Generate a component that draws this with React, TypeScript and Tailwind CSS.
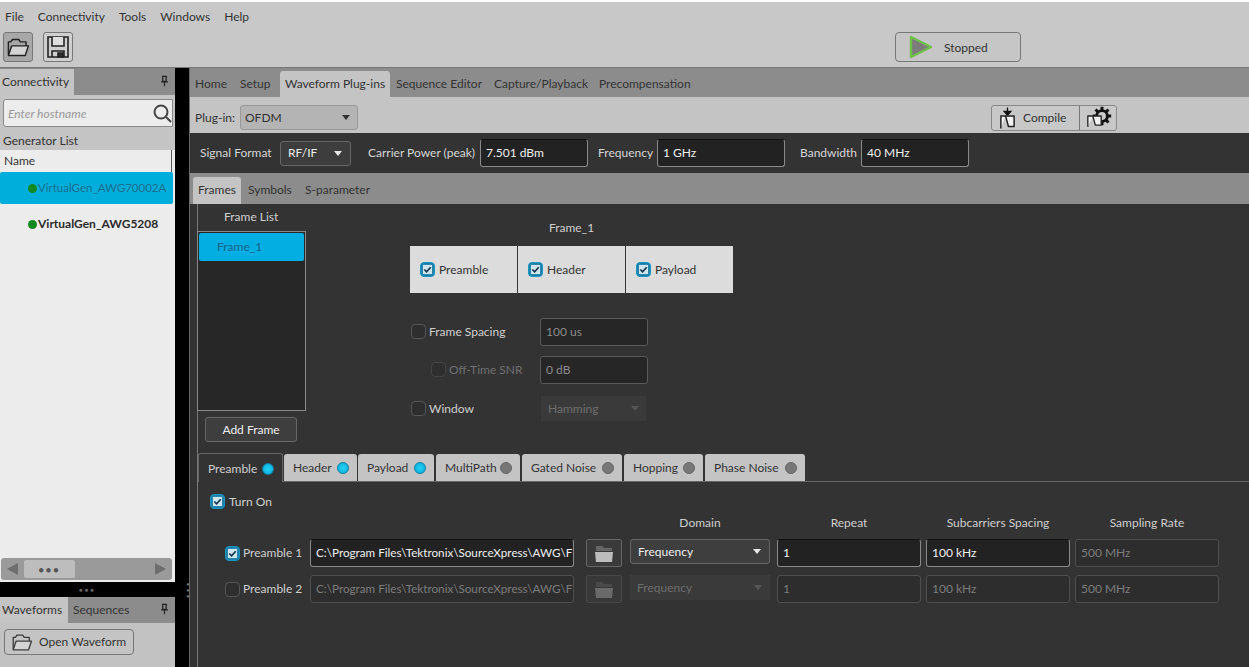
import type { ReactNode } from 'react';

const noiseTabs = [
  { name: 'Preamble', on: true, w: 'w-[85px] mr-[1px]' },
  { name: 'Header', on: true, w: 'w-[73px] mr-[1px]' },
  { name: 'Payload', on: true, w: 'w-[76px] mr-[2px]' },
  { name: 'MultiPath', on: false, w: 'w-[84px] mr-[2px]' },
  { name: 'Gated Noise', on: false, w: 'w-[100px] mr-[2px]' },
  { name: 'Hopping', on: false, w: 'w-[79px] mr-[2px]' },
  { name: 'Phase Noise', on: false, w: 'w-[100px]' },
];

function FolderIcon({ className, tone = '#3c3c3c' }: { className: string; tone?: string }) {
  return (
    <svg viewBox="0 0 30 26" className={className} fill="none" stroke={tone} strokeWidth="1.8" strokeLinejoin="round">
      <path d="M3 22V6h3l2-3h8l2 3h7v5" />
      <path d="M3 23l4-12h21l-4 12z" fill="#d4d4d4" />
    </svg>
  );
}

function SmallFolder({ dim }: { dim?: boolean }) {
  return (
    <svg viewBox="0 0 24 20" className="h-[20px] w-[24px]">
      <path d="M4 3h6l2 2h8v3H4z" fill={dim ? '#4a4a4a' : '#666'} />
      <path d="M3 9h18l-1 10H4z" fill={dim ? '#6a6a6a' : '#bdbdbd'} />
    </svg>
  );
}

function Check({ on, dim }: { on?: boolean; dim?: boolean }) {
  if (on) {
    return (
      <span className="flex h-[15px] w-[15px] shrink-0 items-center justify-center rounded-[4px] border border-[#1399c4] bg-[#1d7fa8]">
        <svg viewBox="0 0 12 12" className="h-[11px] w-[11px]" fill="#cfe6ef" stroke="#12324a" strokeWidth="1.8">
          <path d="M1 1h10v10H1z" stroke="none" />
          <path d="M2.500 6l2.500 2.500 4.500-5" fill="none" />
        </svg>
      </span>
    );
  }
  return <span className={`block h-[15px] w-[15px] shrink-0 rounded-[4px] border ${dim ? 'border-[#444]' : 'border-[#555]'} bg-[#2e2e2e]`} />;
}

function Caret({ color = '#e8e8e8' }: { color?: string }) {
  return <span className="h-0 w-0 border-x-[4px] border-t-[5px] border-x-transparent" style={{ borderTopColor: color }} />;
}

function Field({ children, w, dim, bright }: { children: ReactNode; w: string; dim?: boolean; bright?: boolean }) {
  const look = bright
    ? 'border-[#8a8a8a] border-t-[#111] bg-[#222] text-[#f0f0f0]'
    : dim
      ? 'border-[#4e4e4e] bg-[#2d2d2d] text-[#7c7c7c]'
      : 'border-[#5a5a5a] bg-[#262626] text-[#8c8c8c]';
  return (
    <div className={`flex h-[28px] items-center overflow-hidden whitespace-nowrap rounded-[3px] border px-[5px] ${w} ${look}`}>
      {children}
    </div>
  );
}

function Pin() {
  return (
    <svg viewBox="0 0 10 14" className="h-[12px] w-[9px]" fill="none" stroke="#222" strokeWidth="1.4">
      <path d="M2 1.500h6M3 1.500v6h4v-6M1 8h8M5 8v5" />
    </svg>
  );
}

function Dot({ on }: { on: boolean }) {
  return on ? (
    <span className="h-[12px] w-[12px] rounded-full border border-[#0b7fa3] bg-[radial-gradient(circle,#22d4f5,#0aa8d8)]" />
  ) : (
    <span className="h-[12px] w-[12px] rounded-full border border-[#666] bg-[#777]" />
  );
}

function Stairs({ className }: { className: string }) {
  return (
    <svg viewBox="0 0 18 16" className={className}>
      <path d="M1 15V2h6l3 11h7V2H7" fill="#f2f2f2" stroke="#222" strokeWidth="1.6" strokeLinejoin="round" />
    </svg>
  );
}

export default function App() {
  return (
    <div className="flex h-[667px] w-[1249px] flex-col overflow-hidden bg-[#c2c2c2] text-[12px] leading-none text-[#333] [font-family:'Lato',sans-serif]">
      {/* menu + toolbar */}
      <div className="h-[2px] bg-white" />
      <div className="flex h-[30px] items-center gap-[14px] bg-[#c8c8c8] pl-[5px]">
        {['File', 'Connectivity', 'Tools', 'Windows', 'Help'].map((m) => (
          <span key={m}>{m}</span>
        ))}
      </div>
      <div className="flex h-[35px] items-start gap-[10px] bg-[#c8c8c8] pl-[3px]">
        <div className="flex h-[30px] w-[30px] items-center justify-center rounded-[3px] border border-[#777] bg-[#a8a8a8]">
          <FolderIcon className="h-[21px] w-[24px]" tone="#222" />
        </div>
        <div className="flex h-[30px] w-[30px] items-center justify-center rounded-[3px] border border-[#777] bg-[#cfcfcf]">
          <svg viewBox="0 0 24 24" className="h-[24px] w-[24px]" fill="none" stroke="#222" strokeWidth="1.600">
            <path d="M2 2h20v20H2z" />
            <path d="M6 2v9h12V2" fill="#dedede" />
            <path d="M6 22v-6h12v6" />
            <path d="M12 18h5v4h-5z" fill="#333" />
          </svg>
        </div>
        <div className="ml-[812px] flex h-[30px] w-[126px] items-center rounded-[4px] border border-[#777] bg-[#c6c6c6] pl-[12px]">
          <svg viewBox="0 0 26 26" className="h-[26px] w-[26px]">
            <path d="M3 3l20 10L3 23z" fill="#7c7c7c" stroke="#6fc04a" strokeWidth="2.400" strokeLinejoin="round" />
          </svg>
          <span className="ml-[10px] pt-[1px]">Stopped</span>
        </div>
      </div>

      <div className="flex min-h-0 flex-1 border-t border-[#777]">
        {/* left dock */}
        <div className="flex w-[175px] shrink-0 flex-col">
          <div className="flex h-[27px] items-end justify-between bg-[#8c8c8c] pr-[6px]">
            <div className="flex h-[26px] w-[74px] items-center bg-[#c4c4c4] pb-[1px] pl-[2px]">Connectivity</div>
            <div className="pb-[8px]"><Pin /></div>
          </div>
          <div className="flex h-[36px] items-center bg-[#c4c4c4] pl-[3px]">
            <div className="flex h-[28px] w-[170px] items-center justify-between rounded-l-[3px] border border-[#888] bg-[#ececec] pl-[4px]">
              <span className="pt-[1px] text-[12px] italic text-[#999]">Enter hostname</span>
              <svg viewBox="0 0 20 20" className="h-[20px] w-[20px]" fill="none" stroke="#444" strokeWidth="2">
                <circle cx="9" cy="9" r="6.500" />
                <path d="M14 14l5 5" />
              </svg>
            </div>
          </div>
          <div className="flex h-[19px] items-center bg-[#c4c4c4] pl-[3px]">Generator List</div>
          <div className="flex min-h-0 flex-1 flex-col bg-[#ececec]">
            <div className="mr-[3px] flex h-[22px] items-center border-r border-[#555] pl-[4px]">Name</div>
            <div className="mr-[2px] flex h-[32px] items-center gap-[1px] rounded-[2px] bg-[#00aedb] pl-[28px] text-[#1b6f8e]">
              <span className="h-[9px] w-[9px] shrink-0 rounded-full bg-[#128a22]" />
              <span className="whitespace-nowrap text-[11.5px]">VirtualGen_AWG70002A</span>
            </div>
            <div className="flex h-[40px] items-center gap-[1px] pl-[28px] font-bold text-[#2a2a2a]">
              <span className="h-[9px] w-[9px] shrink-0 rounded-full bg-[#128a22]" />
              <span className="whitespace-nowrap">VirtualGen_AWG5208</span>
            </div>
            <div className="flex-1" />
            <div className="ml-[1px] mr-[3px] mb-[2px] flex h-[22px] items-center justify-between rounded-[3px] bg-[#9a9a9a] px-[6px]">
              <span className="h-0 w-0 border-y-[6px] border-r-[11px] border-y-transparent border-r-[#6e6e6e]" />
              <span className="ml-[6px] mr-[80px] flex h-[18px] w-[56px] items-center justify-center rounded-[2px] bg-[#bdbdbd] text-[9px] tracking-[2px] text-[#555]">●●●</span>
              <span className="h-0 w-0 border-y-[6px] border-l-[11px] border-y-transparent border-l-[#6e6e6e]" />
            </div>
          </div>
          <div className="flex h-[15px] items-center justify-center bg-black text-[6px] tracking-[2px] text-[#666]">●●●</div>
          <div className="flex h-[26px] items-end justify-between bg-[#8c8c8c] pr-[6px]">
            <div className="flex">
              <div className="flex h-[26px] w-[68px] items-center bg-[#c4c4c4] pl-[2px]">Waveforms</div>
              <div className="flex h-[26px] items-center pl-[5px]">Sequences</div>
            </div>
            <div className="pb-[8px]"><Pin /></div>
          </div>
          <div className="h-[44px] bg-[#c2c2c2] pl-[4px] pt-[6px]">
            <div className="flex h-[26px] w-[130px] items-center gap-[5px] rounded-[4px] border border-[#777] bg-[#c4c4c4] pl-[5px]">
              <FolderIcon className="h-[19px] w-[24px]" />
              <span>Open Waveform</span>
            </div>
          </div>
        </div>

        {/* splitter */}
        <div className="flex w-[14px] shrink-0 flex-col items-center justify-end bg-black pb-[68px] pl-[12px] text-[5px] leading-[6px] text-[#777]">
          <span>●</span><span>●</span><span>●</span>
        </div>

        {/* main area */}
        <div className="flex min-w-0 flex-1 flex-col border-l border-[#666] bg-[#333]">
          <div className="flex h-[29px] items-end bg-[#8c8c8c] pl-[5px]">
            <div className="flex h-[26px] w-[45px] items-center">Home</div>
            <div className="flex h-[26px] w-[40px] items-center">Setup</div>
            <div className="flex h-[26px] w-[110px] items-center justify-center rounded-t-[3px] bg-[#c4c4c4]">Waveform Plug-ins</div>
            <div className="ml-[6px] flex h-[26px] w-[98px] items-center">Sequence Editor</div>
            <div className="flex h-[26px] w-[105px] items-center">Capture/Playback</div>
            <div className="flex h-[26px] items-center">Precompensation</div>
          </div>
          <div className="flex h-[36px] items-center bg-[#c4c4c4] pl-[5px] pt-[5px]">
            <span className="w-[45px]">Plug-in:</span>
            <div className="flex h-[25px] w-[118px] items-center justify-between rounded-[3px] border border-[#999] bg-[#b4b4b4] pl-[4px] pr-[7px]">
              OFDM <Caret color="#333" />
            </div>
            <div className="ml-[633px] flex h-[26px] items-center rounded-[3px] border border-[#888] bg-[#c8c8c8]">
              <div className="flex h-full w-[88px] items-center gap-[7px] border-r border-[#777] pl-[7px]">
                <svg viewBox="0 0 18 24" className="h-[24px] w-[17px]">
                  <path d="M9 1v4M5.500 5h7L9 9z" fill="#111" stroke="#111" strokeWidth="1.400" />
                  <path d="M2 23V10h5l3 11h6V10H7" fill="#f2f2f2" stroke="#222" strokeWidth="1.600" strokeLinejoin="round" />
                </svg>
                <span className="pt-[1px]">Compile</span>
              </div>
              <div className="relative flex h-full w-[36px] items-center justify-center">
                <svg viewBox="0 0 24 24" className="h-[20px] w-[20px] -translate-y-[2px] translate-x-[4px]" fill="none" stroke="#111" strokeWidth="3.500" strokeLinejoin="round">
                  <circle cx="12" cy="12" r="6.500" />
                  <path d="M12 1v4M12 19v4M1 12h4M19 12h4M4.200 4.200l2.800 2.800M17 17l2.800 2.800M4.200 19.800L7 17M17 7l2.800-2.800" />
                </svg>
                <Stairs className="absolute bottom-[2px] left-[7px] h-[14px] w-[15px]" />
              </div>
            </div>
          </div>

          <div className="flex h-[40px] items-center bg-[#333] pl-[10px] text-[#d6d6d6]">
            <span className="w-[80px]">Signal Format</span>
            <div className="flex h-[25px] w-[71px] items-center justify-between rounded-[3px] border border-[#666] bg-[#3d3d3d] pl-[7px] pr-[8px] text-[#eee]">
              RF/IF <Caret />
            </div>
            <span className="ml-[17px] w-[112px]">Carrier Power (peak)</span>
            <Field w="w-[108px]" bright>7.501 dBm</Field>
            <span className="ml-[10px] w-[59px]">Frequency</span>
            <Field w="w-[128px]" bright>1 GHz</Field>
            <span className="ml-[15px] w-[61px]">Bandwidth</span>
            <Field w="w-[108px]" bright>40 MHz</Field>
          </div>

          <div className="flex h-[31px] items-end bg-[#8c8c8c] pl-[3px]">
            <div className="flex h-[27px] w-[48px] items-center justify-center rounded-t-[3px] bg-[#c4c4c4] pb-[1px]">Frames</div>
            <span className="ml-[7px] flex h-[27px] w-[57px] items-center pb-[1px]">Symbols</span>
            <span className="flex h-[27px] items-center pb-[1px]">S-parameter</span>
          </div>

          {/* frames panel */}
          <div className="ml-[7px] flex min-h-0 flex-1 flex-col border-l border-[#777] text-[#cfcfcf]">
            <div className="flex h-[250px]">
              <div className="-ml-[1px] w-[109px] shrink-0 pt-[6px]">
                <div className="pl-[27px] leading-[13px]">Frame List</div>
                <div className="mt-[8px] h-[180px] border border-[#8a8a8a] bg-[#272727] p-[1px]">
                  <div className="flex h-[28px] items-center rounded-[2px] bg-[#03aee2] pl-[18px] text-[#17658a]">Frame_1</div>
                </div>
                <div className="ml-[8px] mt-[6px] flex h-[25px] w-[92px] items-center justify-center rounded-[3px] border border-[#666] bg-[#3e3e3e] pt-[1px] text-[#eee]">
                  Add Frame
                </div>
              </div>
              <div className="ml-[104px] pt-[17px]">
                <div className="w-[323px] text-center leading-[13px]">Frame_1</div>
                <div className="mt-[12px] flex h-[47px] w-[323px] gap-[1px] text-[#333]">
                  {['Preamble', 'Header', 'Payload'].map((p) => (
                    <div key={p} className="flex flex-1 items-center gap-[4px] bg-[#dcdcdc] pl-[10px]">
                      <Check on />
                      <span>{p}</span>
                    </div>
                  ))}
                </div>
                <div className="mt-[25px] flex h-[27px] items-center pl-[1px]">
                  <Check />
                  <span className="ml-[3px] w-[111px]">Frame Spacing</span>
                  <Field w="w-[108px]">100 us</Field>
                </div>
                <div className="mt-[11px] flex h-[27px] items-center pl-[21px] text-[#707070]">
                  <Check dim />
                  <span className="ml-[3px] w-[91px]">Off-Time SNR</span>
                  <Field w="w-[108px]">0 dB</Field>
                </div>
                <div className="mt-[12px] flex h-[27px] items-center pl-[1px]">
                  <Check />
                  <span className="ml-[3px] w-[112px]">Window</span>
                  <div className="flex h-[25px] w-[105px] items-center justify-between bg-[#3a3a3a] px-[7px] text-[#6e6e6e]">
                    Hamming <Caret color="#555" />
                  </div>
                </div>
              </div>
            </div>

            <div className="flex h-[28px] items-end border-b border-[#666]">
              {noiseTabs.map((t, i) => (
                <div
                  key={t.name}
                  className={`flex items-center justify-between rounded-t-[3px] pl-[9px] pr-[8px] pt-[1px] ${t.w} ${i === 0 ? 'relative top-[1px] h-[29px] border border-b-0 border-[#666] bg-[#333] text-[#cfcfcf]' : 'h-[27px] bg-[#c4c4c4] text-[#333]'}`}
                >
                  <span>{t.name}</span>
                  <Dot on={t.on} />
                </div>
              ))}
            </div>

            <div className="flex items-center gap-[4px] pl-[12px] pt-[12px]">
              <Check on />
              <span>Turn On</span>
            </div>

            <div className="mt-[6px] grid grid-cols-[42px_70px_264px_12px_36px_8px_140px_7px_144px_5px_144px_5px_144px] grid-rows-[16px_28px_28px] gap-y-[8px]">
              <span className="col-start-7 text-center leading-[16px]">Domain</span>
              <span className="col-start-9 text-center leading-[16px]">Repeat</span>
              <span className="col-start-11 text-center leading-[16px]">Subcarriers Spacing</span>
              <span className="col-start-13 text-center leading-[16px]">Sampling Rate</span>

              <span className="col-start-1 flex items-center justify-end"><Check on /></span>
              <span className="flex items-center whitespace-nowrap pl-[3px]">Preamble 1</span>
              <Field w="w-full" bright><span className="text-[11.7px]">C:\Program Files\Tektronix\SourceXpress\AWG\F</span></Field>
              <span className="col-start-5 flex items-center justify-center rounded-[2px] border border-[#666] bg-[#3a3a3a]"><SmallFolder /></span>
              <div className="col-start-7 flex h-[25px] items-center justify-between rounded-[3px] border border-[#666] bg-[#3e3e3e] pl-[7px] pr-[8px] text-[#eee]">
                Frequency <Caret />
              </div>
              <div className="col-start-9"><Field w="w-full" bright>1</Field></div>
              <div className="col-start-11"><Field w="w-full" bright>100 kHz</Field></div>
              <div className="col-start-13"><Field w="w-full" dim>500 MHz</Field></div>

              <span className="col-start-1 flex items-center justify-end"><Check /></span>
              <span className="flex items-center whitespace-nowrap pl-[3px]">Preamble 2</span>
              <Field w="w-full" dim><span className="text-[11.7px]">C:\Program Files\Tektronix\SourceXpress\AWG\F</span></Field>
              <span className="col-start-5 flex items-center justify-center rounded-[2px] border border-[#484848] bg-[#383838]"><SmallFolder dim /></span>
              <div className="col-start-7 flex h-[25px] items-center justify-between bg-[#3a3a3a] pl-[7px] pr-[8px] text-[#6e6e6e]">
                Frequency <Caret color="#555" />
              </div>
              <div className="col-start-9"><Field w="w-full" dim>1</Field></div>
              <div className="col-start-11"><Field w="w-full" dim>100 kHz</Field></div>
              <div className="col-start-13"><Field w="w-full" dim>500 MHz</Field></div>
            </div>
          </div>
        </div>
      </div>
    </div>
  );
}
